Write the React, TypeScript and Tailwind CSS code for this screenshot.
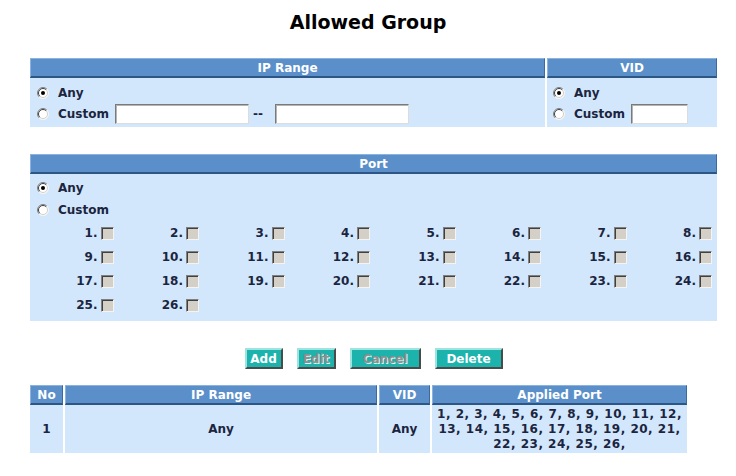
import type { ReactNode } from "react";

/*
  Allowed Group 설정 화면 — 구형 스위치 웹 UI 스타일.
  IP Range / VID / Port 선택 영역 + 버튼 + 등록 목록 표.
*/

const FONT = "font-['DejaVu_Sans',Verdana,sans-serif]";
const TEXT = "text-[#1b2540]";

function Radio({ checked }: { checked?: boolean }) {
  return (
    <svg width="12" height="12" viewBox="0 0 12 12" className="shrink-0">
      <circle cx="6" cy="6" r="5.5" fill="#ffffff" />
      <path d="M2.1 9.9 A5.5 5.5 0 0 1 9.9 2.1" fill="none" stroke="#808080" strokeWidth="1" />
      <path d="M9.9 2.1 A5.5 5.5 0 0 1 2.1 9.9" fill="none" stroke="#f4f4f4" strokeWidth="1" />
      <path d="M2.8 9.2 A4.5 4.5 0 0 1 9.2 2.8" fill="none" stroke="#404040" strokeWidth="1" />
      <path d="M9.2 2.8 A4.5 4.5 0 0 1 2.8 9.2" fill="none" stroke="#d4d0c8" strokeWidth="1" />
      {checked && <circle cx="6" cy="6" r="2" fill="#000000" />}
    </svg>
  );
}

function CheckBox() {
  return (
    <span className="inline-block h-[13px] w-[13px] shrink-0 border border-t-[#808080] border-l-[#808080] border-r-[#f4f4f4] border-b-[#f4f4f4] bg-[#d4d0c8] shadow-[inset_1px_1px_0_#404040]" />
  );
}

function TextBox({ width }: { width: string }) {
  return (
    <span
      className={`inline-block h-[20px] ${width} border border-t-[#7a7a7a] border-l-[#7a7a7a] border-r-[#dcdcdc] border-b-[#dcdcdc] bg-white shadow-[inset_1px_1px_0_#b4b4b4]`}
    />
  );
}

function HeadCell({ children, className = "" }: { children: ReactNode; className?: string }) {
  return (
    <div
      className={`flex h-[20px] items-center justify-center border-t border-l border-t-[#8cb3df] border-l-[#8cb3df] border-r border-r-[#3d6a9e] border-b-2 border-b-[#2c5686] bg-[#5b8fca] text-[12px] font-bold text-white ${className}`}
    >
      {children}
    </div>
  );
}

function OptionRow({ checked, label, children, className = "" }: { checked?: boolean; label: string; children?: ReactNode; className?: string }) {
  return (
    <div className={`flex items-center ${className}`}>
      <Radio checked={checked} />
      <span className="ml-[9px]">{label}</span>
      {children}
    </div>
  );
}

function Button({ label, width, disabled }: { label: string; width: string; disabled?: boolean }) {
  return (
    <div
      className={`flex h-[21px] ${width} items-center justify-center border-2 border-t-[#9fe3e0] border-l-[#9fe3e0] border-r-[#4a4a4a] border-b-[#4a4a4a] bg-[#1db3ad] text-[12px] font-bold ${
        disabled ? "text-[#8e8e8e] [text-shadow:1px_1px_0_#d8f2f0]" : "text-white"
      }`}
    >
      {label}
    </div>
  );
}

const PORTS = Array.from({ length: 26 }, (_, i) => i + 1);

export default function App() {
  return (
    <div className={`min-h-[476px] w-[736px] bg-white px-[30px] ${FONT} ${TEXT}`}>
      <h1 className="pt-[11px] text-center text-[19px] leading-[23px] font-bold text-black">Allowed Group</h1>

      {/* IP Range / VID */}
      <div className="mt-[24px] flex w-[687px] gap-[2px] text-[12px] font-bold">
        <div className="w-[515px]">
          <HeadCell>IP Range</HeadCell>
          <div className="h-[49px] bg-[#d3e7fc] pt-[4px] pl-[7px]">
            <OptionRow checked label="Any" className="h-[21px]" />
            <OptionRow label="Custom" className="h-[22px]">
              <span className="ml-[6px] flex items-center">
                <TextBox width="w-[134px]" />
                <span className="mr-[12px] ml-[4px]">--</span>
                <TextBox width="w-[134px]" />
              </span>
            </OptionRow>
          </div>
        </div>
        <div className="w-[170px]">
          <HeadCell>VID</HeadCell>
          <div className="h-[49px] bg-[#d3e7fc] pt-[4px] pl-[6px]">
            <OptionRow checked label="Any" className="h-[21px]" />
            <OptionRow label="Custom" className="h-[22px]">
              <span className="ml-[6px] flex items-center">
                <TextBox width="w-[57px]" />
              </span>
            </OptionRow>
          </div>
        </div>
      </div>

      {/* Port */}
      <div className="mt-[27px] w-[687px] text-[12px] font-bold">
        <HeadCell>Port</HeadCell>
        <div className="h-[147px] bg-[#d3e7fc] pt-[3px]">
          <div className="pl-[7px]">
            <OptionRow checked label="Any" className="h-[22px]" />
            <OptionRow label="Custom" className="h-[22px]" />
          </div>
          <div className="grid w-[684px] grid-cols-8">
            {PORTS.map((port) => (
              <div key={port} className="flex h-[24px] items-center justify-end gap-[3px] pr-[2px]">
                <span>{port}.</span>
                <CheckBox />
              </div>
            ))}
          </div>
        </div>
      </div>

      {/* Buttons */}
      <div className="mt-[27px] flex w-[687px] justify-center gap-[14px]">
        <Button label="Add" width="w-[38px]" />
        <Button label="Edit" width="w-[39px]" disabled />
        <Button label="Cancel" width="w-[71px]" disabled />
        <Button label="Delete" width="w-[68px]" />
      </div>

      {/* 등록 목록 */}
      <div className="mt-[16px] grid w-[657px] grid-cols-[33px_312px_51px_255px] gap-x-[2px] text-[12px] font-bold">
        <HeadCell>No</HeadCell>
        <HeadCell>IP Range</HeadCell>
        <HeadCell>VID</HeadCell>
        <HeadCell>Applied Port</HeadCell>
        <div className="flex h-[48px] items-center justify-center bg-[#d3e7fc]">1</div>
        <div className="flex h-[48px] items-center justify-center bg-[#d3e7fc]">Any</div>
        <div className="flex h-[48px] items-center justify-center bg-[#d3e7fc]">Any</div>
        <div className="flex h-[48px] flex-col items-center justify-center bg-[#d3e7fc] leading-[15px] tracking-[0.5px] whitespace-nowrap">
          <span>1, 2, 3, 4, 5, 6, 7, 8, 9, 10, 11, 12,</span>
          <span>13, 14, 15, 16, 17, 18, 19, 20, 21,</span>
          <span>22, 23, 24, 25, 26,</span>
        </div>
      </div>
    </div>
  );
}
